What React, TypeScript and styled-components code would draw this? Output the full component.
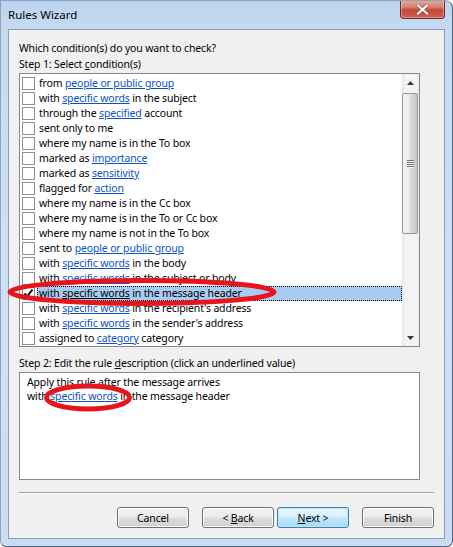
import React from 'react'
import styled, { createGlobalStyle } from 'styled-components'

type Part = string | { link: string }

interface Condition {
  parts: Part[]
  checked?: boolean
}

const conditions: Condition[] = [
  { parts: ['from ', { link: 'people or public group' }] },
  { parts: ['with ', { link: 'specific words' }, ' in the subject'] },
  { parts: ['through the ', { link: 'specified' }, ' account'] },
  { parts: ['sent only to me'] },
  { parts: ['where my name is in the To box'] },
  { parts: ['marked as ', { link: 'importance' }] },
  { parts: ['marked as ', { link: 'sensitivity' }] },
  { parts: ['flagged for ', { link: 'action' }] },
  { parts: ['where my name is in the Cc box'] },
  { parts: ['where my name is in the To or Cc box'] },
  { parts: ['where my name is not in the To box'] },
  { parts: ['sent to ', { link: 'people or public group' }] },
  { parts: ['with ', { link: 'specific words' }, ' in the body'] },
  { parts: ['with ', { link: 'specific words' }, ' in the subject or body'] },
  {
    parts: ['with ', { link: 'specific words' }, ' in the message header'],
    checked: true,
  },
  { parts: ['with ', { link: 'specific words' }, " in the recipient's address"] },
  { parts: ['with ', { link: 'specific words' }, " in the sender's address"] },
  { parts: ['assigned to ', { link: 'category' }, ' category'] },
]

const App = (): React.ReactElement => {
  return (
    <>
      <GlobalStyle />
      <Window>
        <TitleBar>
          <Title>Rules Wizard</Title>
          <CloseButton>
            <svg width="13" height="11" viewBox="0 0 13 11">
              <path d="M2 1.5 L11 9.5 M11 1.5 L2 9.5" stroke="#8a3a30" strokeOpacity="0.7" strokeWidth="3.6" strokeLinecap="square" />
              <path d="M2 1.5 L11 9.5 M11 1.5 L2 9.5" stroke="#fff" strokeWidth="2.2" strokeLinecap="square" />
            </svg>
          </CloseButton>
        </TitleBar>

        <Client>
          <Text>Which condition(s) do you want to check?</Text>
          <Text>
            Step 1: Select <u>c</u>ondition(s)
          </Text>

          <ListBox>
            <Rows>
              {conditions.map((c, i) => (
                <Row key={i}>
                  <CheckBox>
                    {c.checked && (
                      <svg width="11" height="11" viewBox="0 0 11 11">
                        <path d="M1.5 5.5 L4 8.5 L9.5 1.5" stroke="#000" strokeWidth="2" fill="none" />
                      </svg>
                    )}
                  </CheckBox>
                  <RowLabel $selected={!!c.checked}>
                    {c.parts.map((p, j) =>
                      typeof p === 'string' ? (
                        <span key={j}>{p}</span>
                      ) : (
                        <Link key={j} $plain={!!c.checked}>
                          {p.link}
                        </Link>
                      )
                    )}
                  </RowLabel>
                </Row>
              ))}
            </Rows>

            <ScrollBar>
              <ArrowButton>
                <svg width="7" height="4" viewBox="0 0 7 4">
                  <path d="M3.5 0 L7 4 L0 4 Z" fill="#3c3c3c" />
                </svg>
              </ArrowButton>
              <Track>
                <Thumb>
                  <Grip />
                  <Grip />
                  <Grip />
                  <Grip />
                </Thumb>
              </Track>
              <ArrowButton>
                <svg width="7" height="4" viewBox="0 0 7 4">
                  <path d="M0 0 L7 0 L3.5 4 Z" fill="#3c3c3c" />
                </svg>
              </ArrowButton>
            </ScrollBar>
          </ListBox>

          <StepTwo>
            Step 2: Edit the rule <u>d</u>escription (click an underlined value)
          </StepTwo>
          <Description>
            <DescLine>Apply this rule after the message arrives</DescLine>
            <DescLine>
              with <Link $plain={false}>specific words</Link> in the message header
            </DescLine>
          </Description>

          <Separator />

          <Buttons>
            <Button>Cancel</Button>
            <ButtonPair>
              <Button>
                {'< '}
                <u>B</u>ack
              </Button>
              <Button $default>
                <u>N</u>ext{' >'}
              </Button>
            </ButtonPair>
            <Button>Finish</Button>
          </Buttons>
        </Client>

        <Mark style={{ left: 6, top: 277 }} width="271" height="28">
          <ellipse cx="135" cy="14" rx="132" ry="11.5" stroke="#e8141c" strokeWidth="5" fill="none" />
        </Mark>
        <Mark style={{ left: 42, top: 382 }} width="90" height="29">
          <ellipse cx="45" cy="14.5" rx="41.5" ry="11.5" stroke="#e8141c" strokeWidth="5" fill="none" />
        </Mark>
      </Window>
    </>
  )
}

const GlobalStyle = createGlobalStyle`
  html, body {
    margin: 0;
    padding: 0;
    background: #ffffff;
  }
  body {
    font-family: 'Noto Sans', 'Liberation Sans', sans-serif;
    font-size: 10.5px;
    letter-spacing: -0.15px;
    color: #000;
  }
`

const Window = styled.div`
  position: relative;
  width: 453px;
  height: 547px;
  box-sizing: border-box;
  display: flex;
  flex-direction: column;
  border: 1px solid #52667f;
  border-left-color: #8ea3bd;
  border-top-color: #8ea3bd;
  border-radius: 0 8px 6px 6px;
  background: linear-gradient(to bottom, #bcd4ee 0%, #c6dbf2 6%, #cfe1f4 60%, #c9dcf1 100%);
  overflow: hidden;
`

const TitleBar = styled.div`
  height: 28px;
  display: flex;
  justify-content: space-between;
  align-items: flex-start;
  padding: 0 7px 0 7px;
`

const Title = styled.div`
  padding-top: 6px;
  font-size: 11.5px;
  line-height: 16px;
  letter-spacing: 0;
  color: #000;
`

const CloseButton = styled.div`
  width: 45px;
  height: 19px;
  margin-top: -1px;
  box-sizing: border-box;
  display: flex;
  align-items: center;
  justify-content: center;
  border: 1px solid #6e2a22;
  border-top: none;
  border-radius: 0 0 4px 4px;
  background: linear-gradient(to bottom, #e6ad9f 0%, #d5806f 40%, #c4483a 55%, #cf5f4d 100%);
  box-shadow: inset 0 0 0 1px rgba(255, 255, 255, 0.35);
`

const Client = styled.div`
  flex: 1;
  margin: 0 7px 7px 7px;
  border: 1px solid #8a9cb4;
  background: #f0f0f0;
  display: flex;
  flex-direction: column;
  padding: 10px 24px 0 10px;
`

const Text = styled.div`
  line-height: 16px;
  white-space: nowrap;
`

const ListBox = styled.div`
  margin-top: 1px;
  height: 274px;
  box-sizing: border-box;
  border: 1px solid #828790;
  background: #fff;
  display: flex;
`

const Rows = styled.div`
  flex: 1;
  padding: 2px 0 0 0;
  display: flex;
  flex-direction: column;
`

const Row = styled.div`
  height: 15px;
  flex-shrink: 0;
  display: flex;
  align-items: flex-start;
`

const CheckBox = styled.div`
  width: 13px;
  height: 13px;
  box-sizing: border-box;
  margin: 1px 2px 0 2px;
  border: 1px solid #8e8f8f;
  background: #fff;
  display: flex;
  align-items: center;
  justify-content: center;
`

const RowLabel = styled.div<{ $selected: boolean }>`
  flex: 1;
  height: 15px;
  box-sizing: border-box;
  padding: 0 2px;
  line-height: 15px;
  white-space: nowrap;
  background: ${(p) => (p.$selected ? '#a8ccf1' : 'transparent')};
  outline: ${(p) => (p.$selected ? '1px dotted #000' : 'none')};
  outline-offset: -1px;
`

const Link = styled.span<{ $plain: boolean }>`
  color: ${(p) => (p.$plain ? '#000' : '#0a52c6')};
  text-decoration: underline;
  text-underline-offset: 1px;
`

const ScrollBar = styled.div`
  width: 17px;
  display: flex;
  flex-direction: column;
  background: linear-gradient(to right, #e6e6e6 0%, #f3f3f3 20%, #f3f3f3 80%, #ececec 100%);
`

const ArrowButton = styled.div`
  height: 17px;
  display: flex;
  align-items: center;
  justify-content: center;
`

const Track = styled.div`
  flex: 1;
  padding-top: 2px;
  display: flex;
  flex-direction: column;
`

const Thumb = styled.div`
  height: 141px;
  margin: 0 1px 0 0;
  box-sizing: border-box;
  border: 1px solid #979797;
  border-radius: 2px;
  background: linear-gradient(to right, #f2f2f2 0%, #e9e9e9 45%, #d8d8d8 55%, #c8c8c8 100%);
  display: flex;
  flex-direction: column;
  align-items: center;
  justify-content: center;
  gap: 1px;
`

const Grip = styled.div`
  width: 7px;
  height: 1px;
  background: #6f6f6f;
  box-shadow: 0 1px 0 #f4f4f4;
`

const StepTwo = styled.div`
  margin-top: 8px;
  line-height: 16px;
  white-space: nowrap;
`

const Description = styled.div`
  margin-top: 1px;
  height: 108px;
  box-sizing: border-box;
  border: 1px solid #828790;
  background: #fff;
  padding: 2px 7px;
`

const DescLine = styled.div`
  line-height: 14px;
  white-space: nowrap;
`

const Separator = styled.div`
  margin: 12px -14px 0 0;
  height: 1px;
  background: #a0a0a0;
  box-shadow: 0 1px 0 #ffffff;
`

const Buttons = styled.div`
  margin: 14px -14px 0 0;
  display: flex;
  justify-content: flex-end;
  gap: 13px;
`

const ButtonPair = styled.div`
  display: flex;
  gap: 3px;
`

const Button = styled.div<{ $default?: boolean }>`
  width: 72px;
  height: 21px;
  box-sizing: border-box;
  display: flex;
  align-items: center;
  justify-content: center;
  white-space: pre;
  border: 1px solid ${(p) => (p.$default ? '#3c7fb1' : '#707070')};
  border-radius: 3px;
  background: ${(p) =>
    p.$default
      ? 'linear-gradient(to bottom, #eaf6fd 0%, #d9f0fc 45%, #bee6fd 55%, #a7d9f5 100%)'
      : 'linear-gradient(to bottom, #f2f2f2 0%, #ebebeb 45%, #dddddd 55%, #cfcfcf 100%)'};
  box-shadow: inset 0 0 0 1px ${(p) => (p.$default ? '#bfe3f7' : '#fcfcfc')};
  color: #000;
`

const Mark = styled.svg`
  position: absolute;
  overflow: visible;
  pointer-events: none;
`

export default App
